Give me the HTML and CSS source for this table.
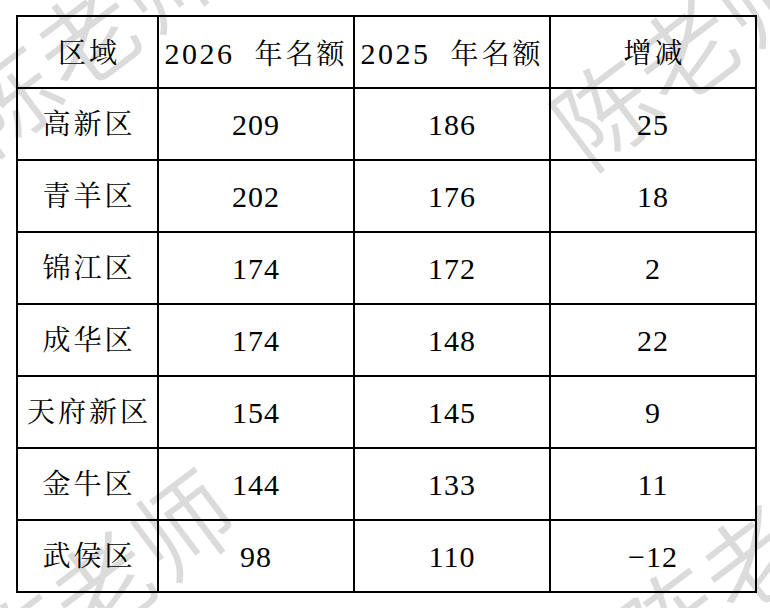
FILE: index.html
```html
<!DOCTYPE html>
<html lang="zh-CN">
<head>
<meta charset="utf-8">
<title>名额对比</title>
<link rel="stylesheet" href="styles.css">
</head>
<body>
<div class="page">
  <table class="quota">
    <colgroup>
      <col class="c1"><col class="c2"><col class="c3"><col class="c4">
    </colgroup>
    <thead>
      <tr>
        <th class="cjk">区域</th>
        <th><span class="yr">2026</span><span class="cjk">年名额</span></th>
        <th><span class="yr">2025</span><span class="cjk">年名额</span></th>
        <th class="cjk">增减</th>
      </tr>
    </thead>
    <tbody>
      <tr><td class="cjk">高新区</td><td>209</td><td>186</td><td>25</td></tr>
      <tr><td class="cjk">青羊区</td><td>202</td><td>176</td><td>18</td></tr>
      <tr><td class="cjk">锦江区</td><td>174</td><td>172</td><td>2</td></tr>
      <tr><td class="cjk">成华区</td><td>174</td><td>148</td><td>22</td></tr>
      <tr><td class="cjk">天府新区</td><td>154</td><td>145</td><td>9</td></tr>
      <tr><td class="cjk">金牛区</td><td>144</td><td>133</td><td>11</td></tr>
      <tr><td class="cjk">武侯区</td><td>98</td><td>110</td><td>−12</td></tr>
    </tbody>
  </table>
  <span class="wm wm-tl">陈老师</span>
  <span class="wm wm-tr">陈老师</span>
  <span class="wm wm-bl">陈老师</span>
  <span class="wm wm-br">陈老师</span>
</div>
</body>
</html>
```

FILE: styles.css
```css
html, body {
  margin: 0;
  padding: 0;
  background: #fff;
}
.page {
  position: relative;
  width: 770px;
  height: 608px;
  overflow: hidden;
  padding: 15px 0 0 16px;
  box-sizing: border-box;
}
.quota {
  border-collapse: collapse;
  table-layout: fixed;
  width: 739px;
  font-family: "Liberation Serif", "Noto Serif CJK SC", "Source Han Serif SC", "AR PL UMing CN", "Noto Sans CJK SC", serif;
  font-size: 30px;
  color: #000;
}
.c1 { width: 141px; }
.c2 { width: 196px; }
.c3 { width: 196px; }
.c4 { width: 206px; }
.quota th,
.quota td {
  border: 2px solid #000;
  padding: 0;
  text-align: center;
  vertical-align: middle;
  font-weight: normal;
  letter-spacing: 1px;
  line-height: 1;
  white-space: nowrap;
}
.quota td {
  height: 68px;
  padding-top: 2px;
}
.quota th {
  height: 66px;
  padding-top: 4px;
}
.cjk {
  font-size: 28px;
  letter-spacing: 3px;
}
.quota th.cjk,
.quota td.cjk {
  letter-spacing: 3px;
  padding-left: 3px;
}
.yr {
  letter-spacing: 2.5px;
  margin-right: 20px;
}
.wm {
  position: absolute;
  pointer-events: none;
  font-family: "Noto Sans CJK SC", sans-serif;
  font-weight: 350;
  font-size: 100px;
  letter-spacing: 0;
  line-height: 1;
  color: rgba(0, 0, 0, 0.14);
  white-space: nowrap;
  transform-origin: center center;
  transform: translate(-50%, -50%) rotate(-37deg);
}
.wm-tl { left: 84px; top: 34px; }
.wm-tr { left: 683px; top: 48px; }
.wm-bl { left: 100px; top: 582px; }
.wm-br { left: 750px; top: 556px; }
```
